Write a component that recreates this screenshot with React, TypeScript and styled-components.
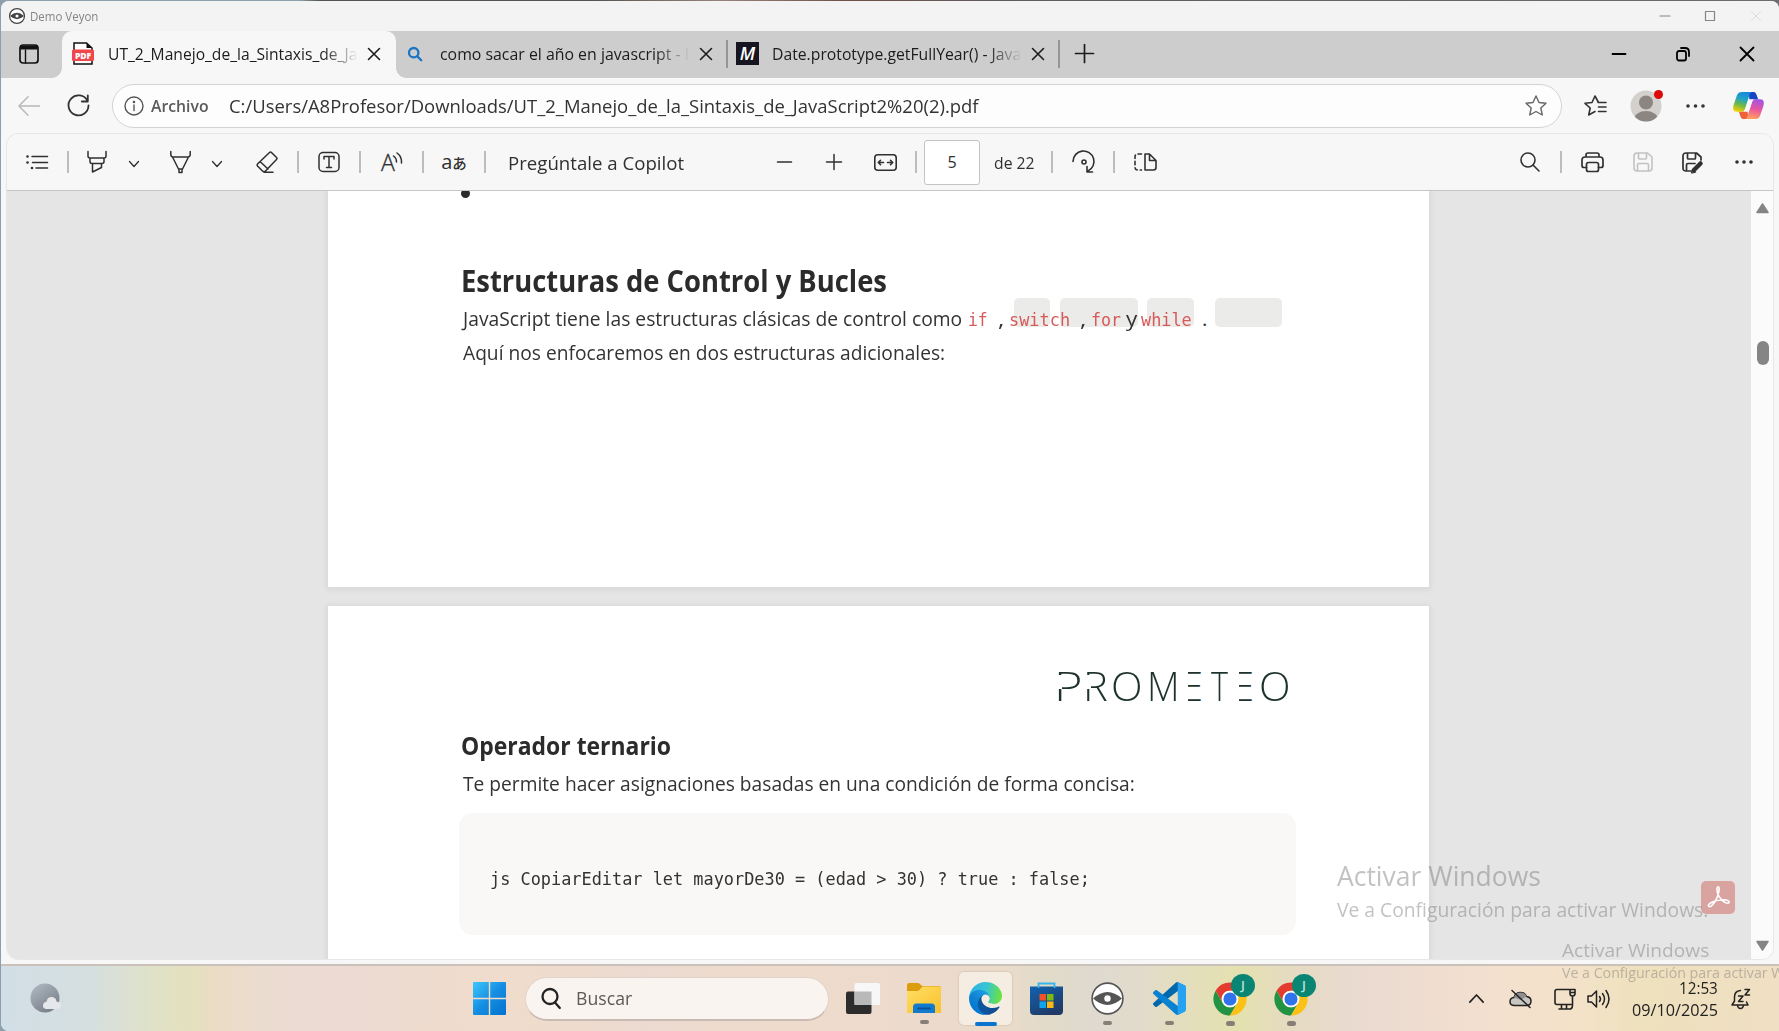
import React, { useLayoutEffect, useRef, useState } from "react";
import styled, { createGlobalStyle } from "styled-components";

const GlobalStyle = createGlobalStyle`
  * { box-sizing: border-box; }
  html, body { margin: 0; padding: 0; overflow: hidden; background: #6e7478; }
  body { font-family: "Open Sans", "Noto Sans", sans-serif; color: #222; }
`;

/* ---------- text that is condensed to a given width ---------- */

const FitBox = styled.div<{ $w: number; $size: number; $lh?: number; $weight?: number; $color?: string; $mono?: boolean; $ml?: number; $y?: number }>`
  flex: none;
  width: ${(p) => p.$w}px;
  margin-left: ${(p) => p.$ml ?? 0}px;
  margin-top: ${(p) => p.$y ?? 0}px;
  font-family: ${(p) => (p.$mono ? '"DejaVu Sans Mono", monospace' : '"Open Sans", "Noto Sans", sans-serif')};
  font-size: ${(p) => p.$size}px;
  line-height: ${(p) => p.$lh ?? Math.round(p.$size * 1.4)}px;
  font-weight: ${(p) => p.$weight ?? 400};
  color: ${(p) => p.$color ?? "inherit"};
  white-space: pre;
`;
const FitInner = styled.span`
  display: inline-block;
  vertical-align: top;
  transform-origin: 0 50%;
`;

type FitProps = { w: number; size: number; lh?: number; weight?: number; color?: string; mono?: boolean; ml?: number; y?: number; children: React.ReactNode };

function Fit({ w, size, lh, weight, color, mono, ml, y, children }: FitProps) {
  const ref = useRef<HTMLSpanElement>(null);
  const [scale, setScale] = useState(1);
  useLayoutEffect(() => {
    if (ref.current) setScale(w / ref.current.offsetWidth);
  }, [w]);
  return (
    <FitBox $w={w} $size={size} $lh={lh} $weight={weight} $color={color} $mono={mono} $ml={ml} $y={y}>
      <FitInner ref={ref} style={{ transform: `scaleX(${scale})` }}>{children}</FitInner>
    </FitBox>
  );
}

/* ---------- shared pieces ---------- */

const Cell = styled.div<{ $ml?: number; $w: number; $color?: string; $drop?: number }>`
  position: relative;
  flex: none;
  display: flex;
  align-items: center;
  justify-content: center;
  margin-left: ${(p) => p.$ml ?? 0}px;
  padding-top: ${(p) => p.$drop ?? 0}px;
  width: ${(p) => p.$w}px;
  color: ${(p) => p.$color ?? "inherit"};
`;

const Svg = styled.svg`
  display: block;
  flex: none;
  overflow: visible;
`;

type IconProps = { w: number; h: number; sw?: number; children: React.ReactNode };
const Icon = ({ w, h, sw = 1.5, children }: IconProps) => (
  <Svg width={w} height={h} viewBox={`0 0 ${w} ${h}`} fill="none" stroke="currentColor" strokeWidth={sw} strokeLinecap="round" strokeLinejoin="round">
    {children}
  </Svg>
);

const Cross = ({ s, sw }: { s: number; sw: number }) => (
  <Icon w={s} h={s} sw={sw}><path d={`M.5 .5 L${s - 0.5} ${s - 0.5} M${s - 0.5} .5 L.5 ${s - 0.5}`} /></Icon>
);
const Dots = ({ w }: { w: number }) => (
  <Icon w={w} h={6}><g fill="currentColor" stroke="none"><circle cx="2" cy="3" r="1.8" /><circle cx={w / 2} cy="3" r="1.8" /><circle cx={w - 2} cy="3" r="1.8" /></g></Icon>
);
const Chevron = ({ w }: { w: number }) => (
  <Icon w={w} h={6} sw={1.3}><path d={`M.5 .5 L${w / 2} 5.5 L${w - 0.5} .5`} /></Icon>
);
const Eye = ({ s, sw, color }: { s: number; sw: number; color: string }) => (
  <Svg width={s} height={s} viewBox="0 0 33 33">
    <circle cx="16.5" cy="16.5" r="15.4" fill="#fff" stroke={color} strokeWidth={sw} />
    <path d="M2 16.5Q16.5 3.500 31 16.500Q16.500 29.500 2 16.500Z" fill={color} />
    <circle cx="16.500" cy="16.500" r="3.200" fill="#fff" />
  </Svg>
);

/* ---------- window ---------- */

const Screen = styled.div`
  width: 1779px;
  height: 1031px;
  padding: 1px 0 0 1px;
  background: linear-gradient(90deg, #8ba0aa 0 300px, #55524f 320px 590px, #96837a 720px, #6d5045 850px, #5f5b60 1000px, #6e6c70);
  overflow: hidden;
  position: relative;
`;
const Frame = styled.div`
  height: 1030px;
  background: #f7f7f7;
  border-radius: 8px 8px 0 8px;
  overflow: hidden;
  display: flex;
  flex-direction: column;
`;
const TitleBar = styled.div`
  height: 30px;
  flex: none;
  display: flex;
  align-items: center;
  background: #f3f3f3;
  color: #858585;
`;
const TabStrip = styled.div`
  height: 47px;
  flex: none;
  display: flex;
  align-items: center;
  padding-bottom: 2px;
  background: #cdcdcd;
  color: #1c1c1c;
`;
const ActiveTab = styled.div`
  position: relative;
  flex: none;
  align-self: flex-start;
  display: flex;
  align-items: center;
  width: 334px;
  height: 47px;
  margin-left: 23px;
  padding-bottom: 2px;
  background: #f7f7f7;
  border-radius: 10px 10px 0 0;
  &::before, &::after {
    content: "";
    position: absolute;
    bottom: 0;
    width: 10px;
    height: 10px;
  }
  &::before { left: -10px; background: radial-gradient(circle at 0 0, #cdcdcd 9.5px, #f7f7f7 10px); }
  &::after { right: -10px; background: radial-gradient(circle at 100% 0, #cdcdcd 9.5px, #f7f7f7 10px); }
`;
const TabTitle = styled.div<{ $ml: number }>`
  flex: none;
  width: 249px;
  margin-left: ${(p) => p.$ml}px;
  overflow: hidden;
  mask-image: linear-gradient(90deg, #000 215px, transparent 250px);
`;
const TabRule = styled.div<{ $ml: number }>`
  flex: none;
  width: 2px;
  height: 28px;
  margin-left: ${(p) => p.$ml}px;
  background: #959595;
`;
const MdnBox = styled.div`
  width: 23px;
  height: 23px;
  background: #17151f;
  color: #fff;
  font: italic 600 18px/22px "Open Sans", sans-serif;
  text-align: center;
`;
const AddressRow = styled.div`
  height: 55px;
  flex: none;
  display: flex;
  align-items: center;
  color: #333;
`;
const UrlPill = styled.div`
  flex: none;
  display: flex;
  align-items: center;
  width: 1450px;
  height: 44px;
  margin-left: 22px;
  border: 1.500px solid #d3d3d3;
  border-radius: 22px;
  background: #fdfdfd;
`;
const RedDot = styled.div`
  position: absolute;
  right: -1px;
  top: 0;
  width: 9px;
  height: 9px;
  border-radius: 50%;
  background: #dc0909;
`;

const Panel = styled.div`
  flex: none;
  width: 1768px;
  height: 827px;
  margin-left: 5px;
  border: 1px solid #e7e7e7;
  border-radius: 12px;
  overflow: hidden;
  display: flex;
  flex-direction: column;
`;
const ToolBar = styled.div`
  flex: none;
  height: 57px;
  display: flex;
  align-items: center;
  border-bottom: 1px solid #c6c6c6;
  color: #303030;
`;
const Rule = styled.div<{ $ml: number }>`
  flex: none;
  width: 1.500px;
  height: 22px;
  margin-left: ${(p) => p.$ml}px;
  margin-right: 0.500px;
  background: #bdbdbd;
`;
const PageInput = styled.div`
  flex: none;
  width: 56px;
  height: 45px;
  margin-left: 7px;
  border: 1.500px solid #c4c4c4;
  border-radius: 3px;
  background: #fff;
  display: flex;
  align-items: center;
  justify-content: center;
`;
const KanaText = styled.span`
  font: 20px/24px "Open Sans", sans-serif;
  white-space: nowrap;
  i { font: normal 500 14.500px/24px "Noto Sans CJK JP", sans-serif; }
`;
const LetterA = styled.span`
  font: 300 23px/26px "Open Sans", sans-serif;
  -webkit-text-stroke: 0.300px #333;
`;

const Viewer = styled.div`
  flex: 1;
  display: flex;
  min-height: 0;
  background: #e5e5e5;
`;
const Pages = styled.div`
  flex: 1;
  overflow: hidden;
  display: flex;
  flex-direction: column;
  padding-left: 321px;
`;
const Page = styled.div<{ $h: number }>`
  flex: none;
  width: 1101px;
  height: ${(p) => p.$h}px;
  background: #fff;
  box-shadow: 0 1px 5px 2px rgba(0, 0, 0, 0.055);
  margin-bottom: 19px;
`;
const Bullet = styled.div`
  width: 9px;
  height: 9px;
  margin: -2px 0 0 133px;
  border-radius: 50%;
  background: #2b2b2b;
`;
const Line = styled.div<{ $mt?: number }>`
  position: relative;
  display: flex;
  padding-left: 135px;
  margin-top: ${(p) => p.$mt ?? 0}px;
  color: #333;
`;
const Heading = styled(Line)`
  padding-left: 132.500px;
  color: #2b2b2b;
`;
const Chips = styled.div`
  position: absolute;
  left: 686px;
  top: -3px;
  display: flex;
`;
const Chip = styled.div<{ $ml?: number; $w: number }>`
  width: ${(p) => p.$w}px;
  height: 29px;
  margin-left: ${(p) => p.$ml ?? 0}px;
  border-radius: 5px;
  background: #ebebea;
`;
const Words = styled.div`
  position: relative;
  display: flex;
`;
const Brand = styled.div`
  display: flex;
  height: 40px;
  margin: 60px 0 0 726px;
  color: #1e3329;
`;
const Glyph = styled.div<{ $ml?: number; $w: number; $cut?: "stem" | "notch" }>`
  position: relative;
  flex: none;
  width: ${(p) => p.$w}px;
  margin-left: ${(p) => p.$ml ?? 0}px;
  &::after {
    content: "";
    position: absolute;
    left: 2px;
    top: ${(p) => (p.$cut === "stem" ? 3 : 9)}px;
    width: ${(p) => (p.$cut === "stem" ? 4.5 : 6)}px;
    height: ${(p) => (p.$cut === "stem" ? 34 : p.$cut ? 14 : 0)}px;
    background: #fff;
  }
`;
const CodeBlock = styled.div`
  width: 837px;
  height: 122px;
  margin: 13px 0 0 131px;
  padding: 48px 0 0 31px;
  border-radius: 14px;
  background: #f9f8f7;
  color: #333;
`;
const ScrollBar = styled.div`
  flex: none;
  width: 22px;
  background: #fbfbfb;
  display: flex;
  flex-direction: column;
  align-items: center;
  padding: 12px 0 0 1px;
`;
const Thumb = styled.div`
  width: 12px;
  height: 24px;
  margin: 128px 0 576px;
  border-radius: 6px;
  background: #858585;
`;
const AdobeButton = styled.div`
  position: absolute;
  left: 1701px;
  top: 881px;
  width: 34px;
  height: 33px;
  border-radius: 5px;
  background: #d9a3a0;
  display: flex;
  align-items: center;
  justify-content: center;
`;
const Watermark = styled.div<{ $x: number; $y: number }>`
  position: absolute;
  left: ${(p) => p.$x}px;
  top: ${(p) => p.$y}px;
  color: rgba(110, 110, 110, 0.420);
`;

/* ---------- task bar ---------- */

const TaskBar = styled.div`
  flex: none;
  height: 67px;
  margin-top: 4px;
  border-top: 2px solid #c9c1ba;
  display: flex;
  align-items: center;
  color: #222;
  background: linear-gradient(90deg, #d2dee7 0, #d5dfdf 90px, #dfe1c8 150px, #e3e0bd 185px, #eadcc5 215px, #ebdcd2 270px, #ecdad3 340px, #efdccd 470px, #f0dccb 520px, #ecdad1 640px, #eedbcb 780px, #ecdacd 900px, #eadbc9 1000px, #e2dbc9 1045px, #dfdad0 1095px, #e2dbcb 1140px, #e4dfb8 1200px, #e4e1b0 1240px, #e5dbc0 1285px, #e9dad0 1350px, #efddd0 1430px, #f3e0ce 1500px, #f3e2c8 1580px, #eee1bd 1640px, #f0dfc4 1779px);
`;
const SearchPill = styled.div`
  flex: none;
  display: flex;
  align-items: center;
  width: 304px;
  height: 44px;
  margin-left: 19px;
  border: 1px solid #e2d3ca;
  border-bottom: 2px solid #c9bbb3;
  border-radius: 22px;
  background: #faf4f0;
  color: #5c5856;
`;
const Tile = styled.div`
  position: relative;
  flex: none;
  display: flex;
  align-items: center;
  justify-content: center;
  width: 53px;
  height: 53px;
  margin-left: 18px;
  border-radius: 5px;
  background: #f5ede2;
  box-shadow: 0 0 1px 1px rgba(150, 130, 110, 0.150);
`;
const Running = styled.div<{ $active?: boolean }>`
  position: absolute;
  bottom: ${(p) => (p.$active ? -1 : -10)}px;
  left: 50%;
  width: ${(p) => (p.$active ? 22 : 9)}px;
  height: 4.500px;
  margin-left: ${(p) => (p.$active ? -11 : -4.5)}px;
  border-radius: 3px;
  background: ${(p) => (p.$active ? "#0a74d0" : "#877f77")};
`;
const Badge = styled.div`
  position: absolute;
  left: 18px;
  top: -8px;
  width: 24px;
  height: 23px;
  border-radius: 50%;
  background: #0a8574;
  color: #b9e2dc;
  font: 600 13px/23px "Open Sans", sans-serif;
  text-align: center;
`;
const Clock = styled.div`
  flex: none;
  width: 85px;
  margin: 0 0 0 22px;
  display: flex;
  flex-direction: column;
  align-items: flex-end;
`;

/* ---------- logos ---------- */

const PdfIcon = () => (
  <Svg width="22" height="23" viewBox="0 0 22 23">
    <path d="M2 1H14.500L20 6V22H2Z" fill="#fff" stroke="#111" strokeWidth="1.500" />
    <path d="M14.500 1V6H20Z" fill="#111" />
    <rect x="0" y="7.500" width="22" height="11.500" rx="1.500" fill="#f0474c" />
    <text x="11" y="16.600" fontSize="8.500" fontWeight="800" fill="#fff" textAnchor="middle" fontFamily="Open Sans, sans-serif">PDF</text>
  </Svg>
);
const CopilotIcon = () => (
  <Svg width="31" height="29" viewBox="0 0 32 32" preserveAspectRatio="none">
    <defs>
      <linearGradient id="cpA" x1="0.600" y1="0" x2="0.300" y2="1"><stop offset="0" stopColor="#1686dd" /><stop offset=".35" stopColor="#1fa3c9" /><stop offset=".65" stopColor="#6bb84b" /><stop offset="1" stopColor="#f5d000" /></linearGradient>
      <linearGradient id="cpB" x1="0.600" y1="0" x2="0.400" y2="1"><stop offset="0" stopColor="#a352e8" /><stop offset=".5" stopColor="#e9569c" /><stop offset="1" stopColor="#ffa35c" /></linearGradient>
    </defs>
    <path d="M16 1H21C23.500 1 24 3 24.600 5L26 9.500H17Z" fill="#1446c4" />
    <path d="M16 31H11C8.500 31 8 29 7.400 27L6 22.500H15Z" fill="#f0603a" />
    <path d="M9.500 1H20C17.800 1 17.200 3.500 16.500 6L12.500 19.500C11.800 22 10.500 23 8 23H4C0 23 -.5 19 .8 15L4 5C5 2 6.500 1 9.500 1Z" fill="url(#cpA)" />
    <path d="M22.500 31H12C14.200 31 14.800 28.500 15.500 26L19.500 12.500C20.200 10 21.500 9 24 9H28C32 9 32.500 13 31.200 17L28 27C27 30 25.500 31 22.500 31Z" fill="url(#cpB)" />
    <path d="M17.500 9.500H21.500Q20 10.500 19.500 12.500L17.200 20Q16.500 22 14.500 22.500H10.800Q12.200 21.500 12.700 19.500L15.500 11Q16 9.500 17.500 9.500Z" fill="#fafafa" />
  </Svg>
);
const EdgeIcon = () => (
  <Svg width="33" height="33" viewBox="0 0 256 256">
    <defs>
      <linearGradient id="edA" x1="63" y1="178" x2="241" y2="178" gradientUnits="userSpaceOnUse"><stop offset="0" stopColor="#0c59a4" /><stop offset="1" stopColor="#114a8b" /></linearGradient>
      <linearGradient id="edB" x1="157" y1="100" x2="46" y2="221" gradientUnits="userSpaceOnUse"><stop offset="0" stopColor="#1b9de2" /><stop offset=".5" stopColor="#1286d3" /><stop offset="1" stopColor="#0078d4" /></linearGradient>
      <linearGradient id="edC" x1="20" y1="70" x2="250" y2="120" gradientUnits="userSpaceOnUse"><stop offset="0" stopColor="#2fb4e8" /><stop offset=".5" stopColor="#38c5cf" /><stop offset="1" stopColor="#6be33e" /></linearGradient>
    </defs>
    <g transform="translate(-4.630 -4.920)">
      <path fill="url(#edA)" d="m235.680 195.460a93.730 93.730 0 0 1-10.540 4.710 101.870 101.870 0 0 1-35.900 6.460c-47.320 0-88.540-32.550-88.540-74.320a31.480 31.480 0 0 1 16.430-27.310c-42.800 1.800-53.800 46.400-53.800 72.530 0 73.880 68.090 81.370 82.760 81.370 7.910 0 19.840-2.300 27-4.560l1.310-.44a128.340 128.340 0 0 0 66.600-52.800 4 4 0 0 0-5.320-5.640z" />
      <path fill="url(#edB)" d="m110.340 246.340a79.200 79.200 0 0 1-22.740-21.340 80.720 80.720 0 0 1 29.530-120c3.120-1.470 8.450-4.130 15.540-4a32.350 32.350 0 0 1 25.690 13 31.880 31.880 0 0 1 6.360 18.660c0-.21 24.460-79.600-80-79.600-43.900 0-80 41.660-80 78.210a130.150 130.150 0 0 0 12.110 56 128 128 0 0 0 156.380 67.110 75.550 75.550 0 0 1-62.780-8z" />
      <path fill="url(#edC)" d="m156.940 153.780c-.81 1.050-3.300 2.500-3.300 5.660 0 2.610 1.700 5.120 4.720 7.230 14.380 10 41.490 8.680 41.560 8.680a59.560 59.560 0 0 0 30.270-8.350 61.380 61.380 0 0 0 30.430-52.880c.26-22.410-8-37.310-11.340-43.910-21.190-41.450-66.930-65.210-116.670-65.210a128 128 0 0 0-128 126.200c.48-36.540 36.800-66.050 80-66.050 3.500 0 23.460.34 42 10.070 16.340 8.580 24.900 18.940 30.850 29.210 6.180 10.670 7.280 24.150 7.280 29.520s-2.740 13.330-7.800 19.830z" />
    </g>
  </Svg>
);
const CodeIcon = () => (
  <Svg width="33" height="33" viewBox="0 0 100 100">
    <path fill="#0068ad" d="M96.500 10.800 75.900.9a6.200 6.200 0 0 0-7.100 1.200L1.300 63.600a4.200 4.200 0 0 0 0 6.200l5.500 5a4.200 4.200 0 0 0 5.300.2L93.400 13.400C96.100 11.300 100 13.300 100 16.700v-.2a6.300 6.300 0 0 0-3.500-5.700z" />
    <path fill="#0a82d2" d="M96.500 89.200 75.900 99.100a6.200 6.200 0 0 1-7.100-1.200L1.300 36.400a4.200 4.200 0 0 1 0-6.200l5.500-5a4.200 4.200 0 0 1 5.300-.2l81.300 61.700c2.700 2 6.600.1 6.600-3.300v.2a6.300 6.300 0 0 1-3.500 5.600z" />
    <path fill="#25a2f2" d="M75.900 99.100a6.200 6.200 0 0 1-7.100-1.200c2.300 2.300 6.200.7 6.200-2.600V4.700c0-3.300-3.900-4.900-6.200-2.600a6.200 6.200 0 0 1 7.100-1.200l20.600 9.900A6.300 6.300 0 0 1 100 16.500v67a6.300 6.300 0 0 1-3.500 5.700z" />
  </Svg>
);
const ChromeIcon = () => (
  <Svg width="34" height="34" viewBox="1.500 1.500 45 45">
    <path fill="#e33b2e" d="M43.050 13H24A11 11 0 0 0 14.470 29.500L4.950 13A22 22 0 0 1 43.050 13Z" />
    <path fill="#229342" d="M4.950 13 14.470 29.500A11 11 0 0 0 33.530 29.500L24 46A22 22 0 0 1 4.950 13Z" />
    <path fill="#fbc116" d="M43.050 13H24A11 11 0 0 1 33.530 29.500L24 46A22 22 0 0 0 43.050 13Z" />
    <circle cx="24" cy="24" r="11" fill="#fff" />
    <circle cx="24" cy="24" r="8.700" fill="#2f74ea" />
  </Svg>
);
const WinLogo = () => (
  <Svg width="33" height="33" viewBox="0 0 33 33">
    <defs><linearGradient id="wn" x1="0" y1="0" x2="33" y2="33" gradientUnits="userSpaceOnUse"><stop offset="0" stopColor="#3fc6fb" /><stop offset=".5" stopColor="#158ee2" /><stop offset="1" stopColor="#0272cf" /></linearGradient></defs>
    <path fill="url(#wn)" d="M1 0H15.800V15.800H0V1Q0 0 1 0ZM17.200 0H32Q33 0 33 1V15.800H17.200ZM0 17.200H15.800V33H1Q0 33 0 32ZM17.200 17.200H33V32Q33 33 32 33H17.200Z" />
  </Svg>
);
const FolderIcon = () => (
  <Svg width="34" height="31" viewBox="0 0 34 31">
    <defs><linearGradient id="fd" x1="0" y1="0" x2="1" y2="1"><stop offset="0" stopColor="#ffdf64" /><stop offset="1" stopColor="#f9c02e" /></linearGradient></defs>
    <path d="M0 2Q0 0 2 0H10.500Q12 0 13 1L15 3H32Q34 3 34 5V9H0Z" fill="#dc9c10" />
    <path d="M0 8H10Q11.500 8 12.500 7L14.500 4.500Q15.500 3.500 17 3.500H34V30H0Z" fill="url(#fd)" />
    <path d="M6 30V24Q6 20.500 9.500 20.500H24.500Q28 20.500 28 24V30Z" fill="#137bcd" />
    <path d="M11 25.500H23" stroke="#0b549c" strokeWidth="1.800" strokeLinecap="round" />
  </Svg>
);
const StoreIcon = () => (
  <Svg width="33" height="33" viewBox="0 0 33 33">
    <defs><linearGradient id="st" x1="0" y1="0" x2="0.600" y2="1"><stop offset="0" stopColor="#0f63b1" /><stop offset="1" stopColor="#213a66" /></linearGradient></defs>
    <path d="M8.500 6V1.500H24.500V6" fill="none" stroke="#36b5ee" strokeWidth="1.800" />
    <path d="M0 4.500H33V29Q33 33 29 33H4Q0 33 0 29Z" fill="url(#st)" />
    <path d="M8.500 4V6M24.500 4V6" stroke="#36b5ee" strokeWidth="1.800" />
    <rect x="9.500" y="12" width="6.500" height="6.500" fill="#f1502a" /><rect x="17" y="12" width="6.500" height="6.500" fill="#7fba10" />
    <rect x="9.500" y="19.500" width="6.500" height="6.500" fill="#10a4ee" /><rect x="17" y="19.500" width="6.500" height="6.500" fill="#fdb913" />
  </Svg>
);

/* ---------- sections ---------- */

const Browser = () => (
  <>
    <TitleBar>
      <Cell $ml={8} $w={16}><Eye s={16} sw={2.600} color="#444" /></Cell>
      <Fit w={68} size={12} ml={5}>Demo Veyon</Fit>
      <Cell $ml={1562} $w={10}><Icon w={10} h={2} sw={1.200}><path d="M0 1H10" /></Icon></Cell>
      <Cell $ml={35} $w={10}><Icon w={10} h={10} sw={1.200}><rect x=".5" y=".5" width="9" height="9" /></Icon></Cell>
      <Cell $ml={36} $w={10} $color="#dcdcdc"><Cross s={10} sw={1} /></Cell>
    </TitleBar>
    <TabStrip>
      <Cell $ml={17} $w={21} $color="#111"><Icon w={20} h={20} sw={1.700}><rect x="1" y="1" width="18" height="18" rx="3" /><path d="M1.500 3.500H18.500" strokeWidth="4" strokeLinecap="butt" /><path d="M6.500 6V19" strokeWidth="1.400" /></Icon></Cell>
      <ActiveTab>
        <Cell $ml={10} $w={22}><PdfIcon /></Cell>
        <TabTitle $ml={14}><Fit w={249} size={16.500} lh={26}>UT_2_Manejo_de_la_Sintaxis_de_Ja</Fit></TabTitle>
        <Cell $ml={10} $w={13}><Cross s={12} sw={1.600} /></Cell>
      </ActiveTab>
      <Cell $ml={12} $w={14} $color="#1b74c4"><Icon w={14} h={14} sw={2.300}><circle cx="5.700" cy="5.700" r="4.700" /><path d="M9.300 9.300L13.200 13.200" /></Icon></Cell>
      <TabTitle $ml={18}><Fit w={249} size={16.500} lh={26}>como sacar el año en javascript - I</Fit></TabTitle>
      <Cell $ml={10} $w={13}><Cross s={12} sw={1.600} /></Cell>
      <TabRule $ml={14} />
      <Cell $ml={8} $w={23}><MdnBox>M</MdnBox></Cell>
      <TabTitle $ml={13}><Fit w={249} size={16.500} lh={26}>Date.prototype.getFullYear() - Java</Fit></TabTitle>
      <Cell $ml={10} $w={13}><Cross s={12} sw={1.600} /></Cell>
      <TabRule $ml={14} />
      <Cell $ml={14} $w={20}><Icon w={19} h={19} sw={1.700}><path d="M9.500 0.500V18.500M.5 9.500H18.500" /></Icon></Cell>
      <Cell $ml={518} $w={14} $color="#000"><Icon w={14} h={2} sw={1.800}><path d="M.5 1H13.500" /></Icon></Cell>
      <Cell $ml={50} $w={14} $color="#000"><Icon w={14} h={14} sw={1.800}><rect x="1" y="4" width="9" height="9.500" rx="2" /><path d="M5 1H9Q13 1 13 5V9" /></Icon></Cell>
      <Cell $ml={50} $w={14} $color="#000"><Cross s={14} sw={1.800} /></Cell>
    </TabStrip>
    <AddressRow>
      <Cell $ml={17} $w={22} $color="#b8b8b8"><Icon w={22} h={20} sw={1.500}><path d="M21.500 10H1M10 .8L1 10L10 19.200" /></Icon></Cell>
      <Cell $ml={27} $w={23}><Icon w={23} h={23} sw={1.800}><path d="M20.500 7A10 10 0 1 0 21.500 11.500M20.800 1.500V7.500H14.800" /></Icon></Cell>
      <UrlPill>
        <Cell $ml={11} $w={20} $color="#555"><Icon w={20} h={20} sw={1.400}><circle cx="10" cy="10" r="9" /><path d="M10 9V14.500" /><circle cx="10" cy="6" r=".6" fill="currentColor" /></Icon></Cell>
        <Fit w={58} size={15.500} ml={7} weight={600} color="#5a5a5a">Archivo</Fit>
        <Fit w={750} size={18.500} ml={20} color="#333">C:/Users/A8Profesor/Downloads/UT_2_Manejo_de_la_Sintaxis_de_JavaScript2%20(2).pdf</Fit>
        <Cell $ml={546} $w={22} $color="#666"><Icon w={22} h={21} sw={1.400}><path d="M11 1L14 7.500L21 8.300L15.800 13L17.300 20L11 16.500L4.700 20L6.200 13L1 8.300L8 7.500Z" /></Icon></Cell>
      </UrlPill>
      <Cell $ml={22} $w={23}><Icon w={23} h={21} sw={1.600}><path d="M14.500 7.500L11 1L8 7.500L1 8.300L6.200 13L4.700 20L11 16.500M14 7.500H22M14.500 12H22M14.500 16.500H22" /></Icon></Cell>
      <Cell $ml={23} $w={32}>
        <Svg width="32" height="32" viewBox="0 0 32 32"><defs><clipPath id="av"><circle cx="16" cy="16" r="15.500" /></clipPath></defs><circle cx="16" cy="16" r="15.500" fill="#d3d0cd" /><g clipPath="url(#av)" fill="#8b8682"><circle cx="16" cy="12.500" r="7" /><ellipse cx="16" cy="29.500" rx="12" ry="8.500" /></g></Svg>
        <RedDot />
      </Cell>
      <Cell $ml={23} $w={20}><Dots w={19} /></Cell>
      <Cell $ml={28} $w={31}><CopilotIcon /></Cell>
    </AddressRow>
  </>
);

const Tools = () => (
  <ToolBar>
    <Cell $ml={19} $w={22}><Icon w={22} h={15}><path d="M6 1.500H21.500M6.500 7.500H21.500M10 13H21.500" /><g fill="currentColor" stroke="none"><circle cx="1.500" cy="1.500" r="1.300" /><circle cx="1.500" cy="7.500" r="1.300" /><circle cx="6" cy="13" r="1.300" /></g></Icon></Cell>
    <Rule $ml={19} />
    <Cell $ml={18} $w={20}><Icon w={20} h={22}><path d="M1 .5V5Q1 7 3 7H17Q19 7 19 5V.5M3 7V10.500Q3 12.500 5 12.500H15Q17 12.500 17 10.500V7M5.500 12.500V21L14.500 16.500V12.500" /></Icon></Cell>
    <Cell $ml={21} $w={11} $drop={3}><Chevron w={10} /></Cell>
    <Cell $ml={31} $w={21}><Icon w={21} h={22}><path d="M.8 .5V3Q.8 6 3 6H18Q20.200 6 20.200 3V.5M2.500 6L9 19V21.500H12V19L18.500 6M8.500 18H12.500" /></Icon></Cell>
    <Cell $ml={21} $w={10} $drop={3}><Chevron w={10} /></Cell>
    <Cell $ml={34} $w={22}><Icon w={22} h={22}><path d="M13.500 1.500Q14.500 .5 15.500 1.500L20.500 6.500Q21.500 7.500 20.500 8.500L9.500 20Q8 21.500 6.500 20L1.500 15Q.5 14 1.500 13ZM4 10.500L12 18M8 21.300H17" /></Icon></Cell>
    <Rule $ml={19} />
    <Cell $ml={19} $w={22}><Icon w={22} h={20}><rect x="1" y=".5" width="20" height="19" rx="4" /><path d="M6 7V4.500H16V7M11 4.500V15.500M8.500 15.500H13.500" /></Icon></Cell>
    <Rule $ml={19} />
    <Cell $ml={20} $w={23}><LetterA>A</LetterA><Icon w={9} h={20} sw={1.500}><path d="M-1.500 4Q1.500 6 1.500 10M2 1Q7 4.500 6.500 11" /></Icon></Cell>
    <Rule $ml={18} />
    <Cell $ml={17} $w={26}><KanaText>a<i>あ</i></KanaText></Cell>
    <Rule $ml={17} />
    <Fit w={176} size={18} ml={22} y={3}>Pregúntale a Copilot</Fit>
    <Cell $ml={93} $w={15}><Icon w={15} h={2}><path d="M.5 1H14.500" /></Icon></Cell>
    <Cell $ml={34} $w={16}><Icon w={16} h={16}><path d="M.5 8H15.500M8 .5V15.500" /></Icon></Cell>
    <Cell $ml={32} $w={23}><Icon w={23} h={17} sw={1.600}><rect x=".8" y=".8" width="21.400" height="15.400" rx="3" /><path d="M4.500 8.500H9.500M6.500 6.300L4.300 8.500L6.500 10.700M13.500 8.500H18.500M16.500 6.300L18.700 8.500L16.500 10.700" /></Icon></Cell>
    <Rule $ml={18} />
    <PageInput><Fit w={9} size={16}>5</Fit></PageInput>
    <Fit w={41} size={16.500} ml={14}>de 22</Fit>
    <Rule $ml={16} />
    <Cell $ml={19} $w={24}><Icon w={24} h={22} sw={1.600}><path d="M1 10.500A10.500 10.500 0 1 1 16 20M15 15.500V21H20.500" /><circle cx="12" cy="11" r="2" /></Icon></Cell>
    <Rule $ml={17} />
    <Cell $ml={19} $w={23}><Icon w={23} h={18} sw={1.600}><path d="M11 1H15.500L22 7.500V14.500Q22 17 19.500 17H11ZM15.500 1V7.500H22" /><path d="M7.500 1H4Q1 1 1 4V14Q1 17 4 17H7.500" strokeDasharray="3.500 2.800" /></Icon></Cell>
    <Cell $ml={363} $w={20}><Icon w={20} h={20} sw={1.600}><circle cx="8" cy="8" r="7" /><path d="M13 13L19 19" /></Icon></Cell>
    <Rule $ml={20} />
    <Cell $ml={19} $w={23}><Icon w={23} h={20} sw={1.700}><path d="M5.500 15.500H3Q1 15.500 1 13.500V8Q1 5 4 5H19Q22 5 22 8V13.500Q22 15.500 20 15.500H17.500M5 4.500V3Q5 1 7 1H16Q18 1 18 3V4.500" /><rect x="5.500" y="10.500" width="12" height="9" rx="2" /></Icon></Cell>
    <Cell $ml={29} $w={20} $color="#c2c2c2"><Icon w={20} h={20} sw={1.600}><path d="M1 4Q1 1 4 1H14.500L19 5V16Q19 19 16 19H4Q1 19 1 16ZM5.500 1V6Q5.500 7 6.500 7H12.500Q13.500 7 13.500 6V1M4.500 19V13Q4.500 11.500 6 11.500H14Q15.500 11.500 15.500 13V19" /></Icon></Cell>
    <Cell $ml={29} $w={22}><Icon w={22} h={20} sw={1.700}><path d="M9 19H4Q1 19 1 16V4Q1 1 4 1H14.500L19 5V8M5.500 1V6Q5.500 7 6.500 7H12.500Q13.500 7 13.500 6V1M4.500 19V13Q4.500 11.500 6 11.500H13" /><path d="M12 18L18.500 11.500" strokeWidth="4.500" /><path d="M9.500 20.800L10.500 17L13.500 20Z" fill="currentColor" strokeWidth="1" /></Icon></Cell>
    <Cell $ml={30} $w={19}><Dots w={18} /></Cell>
  </ToolBar>
);

const red = "#d75a58";

const Document = () => (
  <Viewer>
    <Pages>
      <Page $h={396}>
        <Bullet />
        <Heading $mt={64}><Fit w={426} size={29.500} lh={37} weight={700}>Estructuras de Control y Bucles</Fit></Heading>
        <Line $mt={2}>
          <Chips><Chip $w={36} /><Chip $ml={10} $w={78} /><Chip $ml={9} $w={47} /><Chip $ml={21} $w={67} /></Chips>
          <Words>
            <Fit w={499} size={20.500} lh={34}>JavaScript tiene las estructuras clásicas de control como</Fit>
            <Fit w={20} size={17.200} lh={38} ml={6} mono color={red}>if</Fit>
            <Fit w={6} size={20.500} lh={34} ml={10}>,</Fit>
            <Fit w={61} size={17.200} lh={38} ml={5} mono color={red}>switch</Fit>
            <Fit w={6} size={20.500} lh={34} ml={10}>,</Fit>
            <Fit w={30} size={17.200} lh={38} ml={5} mono color={red}>for</Fit>
            <Fit w={11} size={20.500} lh={34} ml={5}>y</Fit>
            <Fit w={51} size={17.200} lh={38} ml={4} mono color={red}>while</Fit>
            <Fit w={5} size={20.500} lh={34} ml={10}>.</Fit>
          </Words>
        </Line>
        <Line $mt={-4}><Fit w={482} size={20.500} lh={34}>Aquí nos enfocaremos en dos estructuras adicionales:</Fit></Line>
      </Page>
      <Page $h={354}>
        <Brand>
          <Glyph $w={28} $cut="notch"><Fit w={28} size={40} lh={40} weight={300}>P</Fit></Glyph>
          <Glyph $ml={1} $w={25} $cut="notch"><Fit w={25} size={40} lh={40} weight={300}>R</Fit></Glyph>
          <Glyph $ml={3} $w={32}><Fit w={32} size={40} lh={40} weight={300}>O</Fit></Glyph>
          <Glyph $ml={4} $w={33}><Fit w={33} size={40} lh={40} weight={300}>M</Fit></Glyph>
          <Glyph $ml={1} $w={22} $cut="stem"><Fit w={22} size={40} lh={40} weight={300}>E</Fit></Glyph>
          <Glyph $ml={8} $w={17}><Fit w={17} size={40} lh={40} weight={300}>T</Fit></Glyph>
          <Glyph $ml={4} $w={22} $cut="stem"><Fit w={22} size={40} lh={40} weight={300}>E</Fit></Glyph>
          <Glyph $ml={5} $w={32}><Fit w={32} size={40} lh={40} weight={300}>O</Fit></Glyph>
        </Brand>
        <Heading $mt={23}><Fit w={210} size={25} lh={32} weight={700}>Operador ternario</Fit></Heading>
        <Line $mt={5}><Fit w={672} size={20.500} lh={34}>Te permite hacer asignaciones basadas en una condición de forma concisa:</Fit></Line>
        <CodeBlock><Fit w={600} size={17} lh={36} mono>{"js CopiarEditar let mayorDe30 = (edad > 30) ? true : false;"}</Fit></CodeBlock>
      </Page>
    </Pages>
    <ScrollBar>
      <Icon w={13} h={10}><path d="M6.500 1L12 9.500H1Z" fill="#858585" stroke="#858585" /></Icon>
      <Thumb />
      <Icon w={13} h={10}><path d="M6.500 9L12 .5H1Z" fill="#858585" stroke="#858585" /></Icon>
    </ScrollBar>
  </Viewer>
);

const Chrome = () => (
  <Cell $ml={27} $w={34}><ChromeIcon /><Badge>J</Badge><Running /></Cell>
);

const Tasks = () => (
  <TaskBar>
    <Cell $ml={29} $w={31}>
      <Svg width="31" height="31" viewBox="0 0 31 31"><defs><linearGradient id="mo" x1="0" y1="0" x2="0.700" y2="1"><stop offset="0" stopColor="#b3bcc6" /><stop offset="1" stopColor="#777e88" /></linearGradient></defs><circle cx="15" cy="15" r="14.500" fill="url(#mo)" /><path d="M16 26Q12.500 25.500 13 22Q13.500 19 16.500 18.800Q17 14 21.500 14Q26 14 26.500 18.500Q31 19 31 22Q31 26 27 26Z" fill="#e5e7ea" /></Svg>
    </Cell>
    <Cell $ml={412} $w={33}><WinLogo /></Cell>
    <SearchPill>
      <Cell $ml={15} $w={20} $color="#222"><Icon w={20} h={21} sw={2.300}><circle cx="9" cy="8.500" r="7.500" /><path d="M14 14.500L18.800 20" /></Icon></Cell>
      <Fit w={56} size={18} ml={15}>Buscar</Fit>
    </SearchPill>
    <Cell $ml={17} $w={34}>
      <Svg width="34" height="31" viewBox="0 0 34 31"><rect x="0" y="8.500" width="25.500" height="22.500" rx="2" fill="#2c2c2c" /><rect x="8.500" y="0" width="25.500" height="22" rx="1.500" fill="#f7f7f7" /><rect x="8.500" y="8.500" width="17" height="13.500" fill="#b9b9b9" /></Svg>
    </Cell>
    <Cell $ml={27} $w={34}><FolderIcon /><Running /></Cell>
    <Tile><EdgeIcon /><Running $active /></Tile>
    <Cell $ml={18} $w={33}><StoreIcon /></Cell>
    <Cell $ml={28} $w={33}><Eye s={33} sw={1.600} color="#555" /><Running /></Cell>
    <Cell $ml={28} $w={34}><CodeIcon /><Running /></Cell>
    <Chrome />
    <Chrome />
    <Cell $ml={161} $w={15}><Icon w={15} h={9} sw={1.700}><path d="M.8 8.200L7.500 1L14.200 8.200" /></Icon></Cell>
    <Cell $ml={25} $w={23}><Icon w={23} h={18} sw={1.500}><path d="M5.500 15.500Q1 15.500 1 11.500Q1 8 5 7.500Q6.500 2.500 11.500 2.500Q16 2.500 17.500 6.500Q22 7 22 11Q22 15.500 17.500 15.500Z" fill="#c9c6c2" /><path d="M5 7.500Q6.500 2.500 11.500 2.500Q16 2.500 17.500 6.500L12 10Z" fill="#8f8e8e" stroke="none" /><path d="M3 .5L21 17.500" /></Icon></Cell>
    <Cell $ml={22} $w={22}><Icon w={22} h={22} sw={1.600}><path d="M15 1.500H3Q1 1.500 1 3.500V14.500Q1 16.500 3 16.500H17M7.500 16.500V21M12.500 16.500V21M5 21H16M16 1.500H21V5.500Q21 8 18.500 8Q16 8 16 5.500ZM16 4.500H21M18.500 8V17Q18.500 20.500 16.500 21" /></Icon></Cell>
    <Cell $ml={11} $w={24}><Icon w={24} h={20} sw={1.500}><path d="M1 7H4.500L9.500 2V18L4.500 13H1ZM12.500 7.500Q14.500 10 12.500 12.500M15.500 4.500Q19.500 10 15.500 15.500M19 1.500Q25 10 19 18.500" /></Icon></Cell>
    <Clock>
      <Fit w={39} size={16} lh={22}>12:53</Fit>
      <Fit w={86} size={16} lh={22}>09/10/2025</Fit>
    </Clock>
    <Cell $ml={12} $w={21}><Icon w={20} h={21} sw={1.500}><path d="M9.500 2.500Q3.500 3 3.500 9V13L1 17H17L15.500 14M6.500 17.500Q7 20.500 9.500 20.500Q12 20.500 12.500 17.500M7.500 8H12L7.500 13.500H12M14 1.500H18.500L14 7H18.500" /></Icon></Cell>
  </TaskBar>
);

export default function App() {
  return (
    <>
      <GlobalStyle />
      <Screen>
        <Frame>
          <Browser />
          <Panel>
            <Tools />
            <Document />
          </Panel>
          <Tasks />
        </Frame>
        <AdobeButton>
          <Svg width="23" height="23" viewBox="0 0 23 23" fill="none" stroke="#fff" strokeWidth="1.600"><path d="M2 20.500C-1 18.500 7 14 15.500 13.800C21 13.500 23.500 16 21.500 17C18.500 18.500 12 12.500 10.500 7C9.500 3 10 .8 11.200 .8C13.500 1 11.500 10 8 15.500C5.500 19.500 3 21.300 2 20.500Z" /></Svg>
        </AdobeButton>
        <Watermark $x={1337} $y={857}>
          <Fit w={204} size={27} lh={37}>Activar Windows</Fit>
          <Fit w={371} size={20} lh={31}>Ve a Configuración para activar Windows.</Fit>
        </Watermark>
        <Watermark $x={1562} $y={936}>
          <Fit w={147} size={19} lh={28}>Activar Windows</Fit>
          <Fit w={273} size={14.500} lh={17}>Ve a Configuración para activar Windows.</Fit>
        </Watermark>
      </Screen>
    </>
  );
}
